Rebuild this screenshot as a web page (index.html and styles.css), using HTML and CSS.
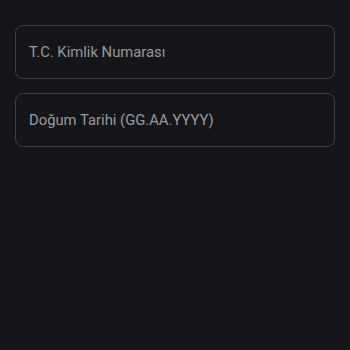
FILE: index.html
```html
<!DOCTYPE html>
<html lang="tr">
<head>
    <meta charset="UTF-8">
    <meta name="viewport" content="width=device-width, initial-scale=1.0">
    <title>Kimlik Doğrulama</title>
    <link rel="stylesheet" href="styles.css">
</head>
<body>
    <form class="form">
        <input class="field" type="text" placeholder="T.C. Kimlik Numarası">
        <input class="field" type="text" placeholder="Doğum Tarihi (GG.AA.YYYY)">
    </form>
</body>
</html>
```

FILE: styles.css
```css
html, body {
    margin: 0;
    height: 100%;
    background-color: #141519;
}
.form {
    display: flex;
    flex-direction: column;
    gap: 14px;
    padding: 25px 15px;
}
.field {
    box-sizing: border-box;
    height: 54px;
    width: 100%;
    padding: 0 13px;
    background: transparent;
    border: 1px solid #3d3e43;
    border-radius: 8px;
    color: #e0e0e0;
    font-family: Roboto, "Noto Sans", sans-serif;
    font-size: 14.8px;
    outline: none;
}
.field::placeholder {
    color: #9a9a9e;
}
```
